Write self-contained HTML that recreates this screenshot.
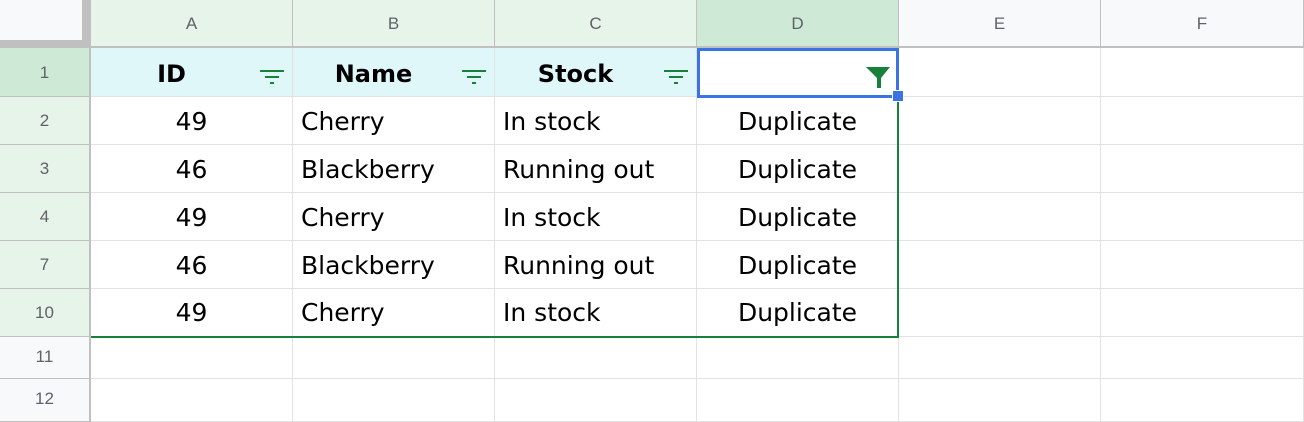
<!DOCTYPE html><html><head><style>
body{margin:0;width:1304px;height:422px;overflow:hidden;background:#fff;font-family:"Liberation Sans",sans-serif;position:relative}
div{position:absolute;box-sizing:border-box}
.ch{top:0;height:48px;border-right:1px solid #c0c0c0;border-bottom:2px solid #c0c0c0;color:#5f6368;font-size:17px;text-align:center;line-height:48px}
.rh{left:0;width:91px;border-right:2px solid #c0c0c0;border-bottom:1px solid #c0c0c0;color:#5f6368;font-size:17px;text-align:center}
.c{border-right:1px solid #e2e2e2;border-bottom:1px solid #e2e2e2;font-family:"DejaVu Sans",sans-serif;font-size:25px;color:#000;white-space:nowrap;padding-left:8px}
.hd{background:#e0f7fa;font-weight:bold;text-align:center;padding:0;font-size:24px}
.ctr{text-align:center;padding:0}
.f{height:2px;background:#188038}
</style></head><body>
<div style="left:0;top:0;width:91px;height:48px;background:#c0c0c0"></div>
<div style="left:0;top:0;width:82px;height:40px;background:#f8f9fa"></div>
<div class="ch" style="left:91px;width:202px;background:#e6f4ea">A</div>
<div class="ch" style="left:293px;width:202px;background:#e6f4ea">B</div>
<div class="ch" style="left:495px;width:202px;background:#e6f4ea">C</div>
<div class="ch" style="left:697px;width:202px;background:#ceead6">D</div>
<div class="ch" style="left:899px;width:202px;background:#f8f9fa">E</div>
<div class="ch" style="left:1101px;width:203px;background:#f8f9fa">F</div>

<div class="rh" style="top:48px;height:49px;line-height:49px;background:#ceead6">1</div>
<div class="rh" style="top:97px;height:48px;line-height:48px;background:#e6f4ea">2</div>
<div class="rh" style="top:145px;height:48px;line-height:48px;background:#e6f4ea">3</div>
<div class="rh" style="top:193px;height:48px;line-height:48px;background:#e6f4ea">4</div>
<div class="rh" style="top:241px;height:48px;line-height:48px;background:#e6f4ea">7</div>
<div class="rh" style="top:289px;height:48px;line-height:48px;background:#e6f4ea">10</div>
<div class="rh" style="top:337px;height:42px;line-height:40px;background:#f8f9fa">11</div>
<div class="rh" style="top:379px;height:43px;line-height:40px;background:#f8f9fa">12</div>

<div class="c hd" style="left:91px;top:48px;width:202px;height:49px;line-height:52px"><span style="position:relative;left:-20px">ID</span></div>
<div class="c hd" style="left:293px;top:48px;width:202px;height:49px;line-height:52px"><span style="position:relative;left:-20px">Name</span></div>
<div class="c hd" style="left:495px;top:48px;width:202px;height:49px;line-height:52px"><span style="position:relative;left:-20px">Stock</span></div>
<div class="c" style="left:697px;top:48px;width:202px;height:49px"></div>
<div class="c" style="left:899px;top:48px;width:202px;height:49px"></div>
<div class="c" style="left:1101px;top:48px;width:203px;height:49px"></div>

<div class="f" style="left:260px;top:70px;width:24px"></div><div class="f" style="left:265px;top:76px;width:14px"></div><div class="f" style="left:270px;top:82px;width:4px"></div>
<div class="f" style="left:462px;top:70px;width:24px"></div><div class="f" style="left:467px;top:76px;width:14px"></div><div class="f" style="left:472px;top:82px;width:4px"></div>
<div class="f" style="left:664px;top:70px;width:24px"></div><div class="f" style="left:669px;top:76px;width:14px"></div><div class="f" style="left:674px;top:82px;width:4px"></div>

<div style="left:0;top:97px;width:1304px">
<div class="c ctr" style="left:91px;top:0;width:202px;height:48px;line-height:50px">49</div><div class="c" style="left:293px;top:0;width:202px;height:48px;line-height:50px">Cherry</div><div class="c" style="left:495px;top:0;width:202px;height:48px;line-height:50px">In stock</div><div class="c ctr" style="left:697px;top:0;width:202px;height:48px;line-height:50px">Duplicate</div><div class="c" style="left:899px;top:0;width:202px;height:48px"></div><div class="c" style="left:1101px;top:0;width:203px;height:48px"></div>
</div>
<div style="left:0;top:145px;width:1304px">
<div class="c ctr" style="left:91px;top:0;width:202px;height:48px;line-height:50px">46</div><div class="c" style="left:293px;top:0;width:202px;height:48px;line-height:50px">Blackberry</div><div class="c" style="left:495px;top:0;width:202px;height:48px;line-height:50px">Running out</div><div class="c ctr" style="left:697px;top:0;width:202px;height:48px;line-height:50px">Duplicate</div><div class="c" style="left:899px;top:0;width:202px;height:48px"></div><div class="c" style="left:1101px;top:0;width:203px;height:48px"></div>
</div>
<div style="left:0;top:193px;width:1304px">
<div class="c ctr" style="left:91px;top:0;width:202px;height:48px;line-height:50px">49</div><div class="c" style="left:293px;top:0;width:202px;height:48px;line-height:50px">Cherry</div><div class="c" style="left:495px;top:0;width:202px;height:48px;line-height:50px">In stock</div><div class="c ctr" style="left:697px;top:0;width:202px;height:48px;line-height:50px">Duplicate</div><div class="c" style="left:899px;top:0;width:202px;height:48px"></div><div class="c" style="left:1101px;top:0;width:203px;height:48px"></div>
</div>
<div style="left:0;top:241px;width:1304px">
<div class="c ctr" style="left:91px;top:0;width:202px;height:48px;line-height:50px">46</div><div class="c" style="left:293px;top:0;width:202px;height:48px;line-height:50px">Blackberry</div><div class="c" style="left:495px;top:0;width:202px;height:48px;line-height:50px">Running out</div><div class="c ctr" style="left:697px;top:0;width:202px;height:48px;line-height:50px">Duplicate</div><div class="c" style="left:899px;top:0;width:202px;height:48px"></div><div class="c" style="left:1101px;top:0;width:203px;height:48px"></div>
</div>
<div style="left:0;top:289px;width:1304px">
<div class="c ctr" style="left:91px;top:0;width:202px;height:48px;line-height:48px">49</div><div class="c" style="left:293px;top:0;width:202px;height:48px;line-height:48px">Cherry</div><div class="c" style="left:495px;top:0;width:202px;height:48px;line-height:48px">In stock</div><div class="c ctr" style="left:697px;top:0;width:202px;height:48px;line-height:48px">Duplicate</div><div class="c" style="left:899px;top:0;width:202px;height:48px"></div><div class="c" style="left:1101px;top:0;width:203px;height:48px"></div>
</div>
<div style="left:0;top:337px;width:1304px">
<div class="c" style="left:91px;top:0;width:202px;height:42px"></div><div class="c" style="left:293px;top:0;width:202px;height:42px"></div><div class="c" style="left:495px;top:0;width:202px;height:42px"></div><div class="c" style="left:697px;top:0;width:202px;height:42px"></div><div class="c" style="left:899px;top:0;width:202px;height:42px"></div><div class="c" style="left:1101px;top:0;width:203px;height:42px"></div>
</div>
<div style="left:0;top:379px;width:1304px">
<div class="c" style="left:91px;top:0;width:202px;height:43px"></div><div class="c" style="left:293px;top:0;width:202px;height:43px"></div><div class="c" style="left:495px;top:0;width:202px;height:43px"></div><div class="c" style="left:697px;top:0;width:202px;height:43px"></div><div class="c" style="left:899px;top:0;width:202px;height:43px"></div><div class="c" style="left:1101px;top:0;width:203px;height:43px"></div>
</div>

<div style="left:897px;top:48px;width:2px;height:290px;background:#188038"></div>
<div style="left:91px;top:336px;width:808px;height:2px;background:#188038"></div>
<div style="left:697px;top:48px;width:202px;height:50px;border:3px solid #3a73e3"></div>
<div style="left:892px;top:90px;width:12px;height:12px;background:#3a73e3;border:1px solid #fff"></div>
<svg style="position:absolute;left:864px;top:66px" width="28" height="24"><path d="M2 1H26L17 12V22H13V12Z" fill="#188038"/></svg>
</body></html>
